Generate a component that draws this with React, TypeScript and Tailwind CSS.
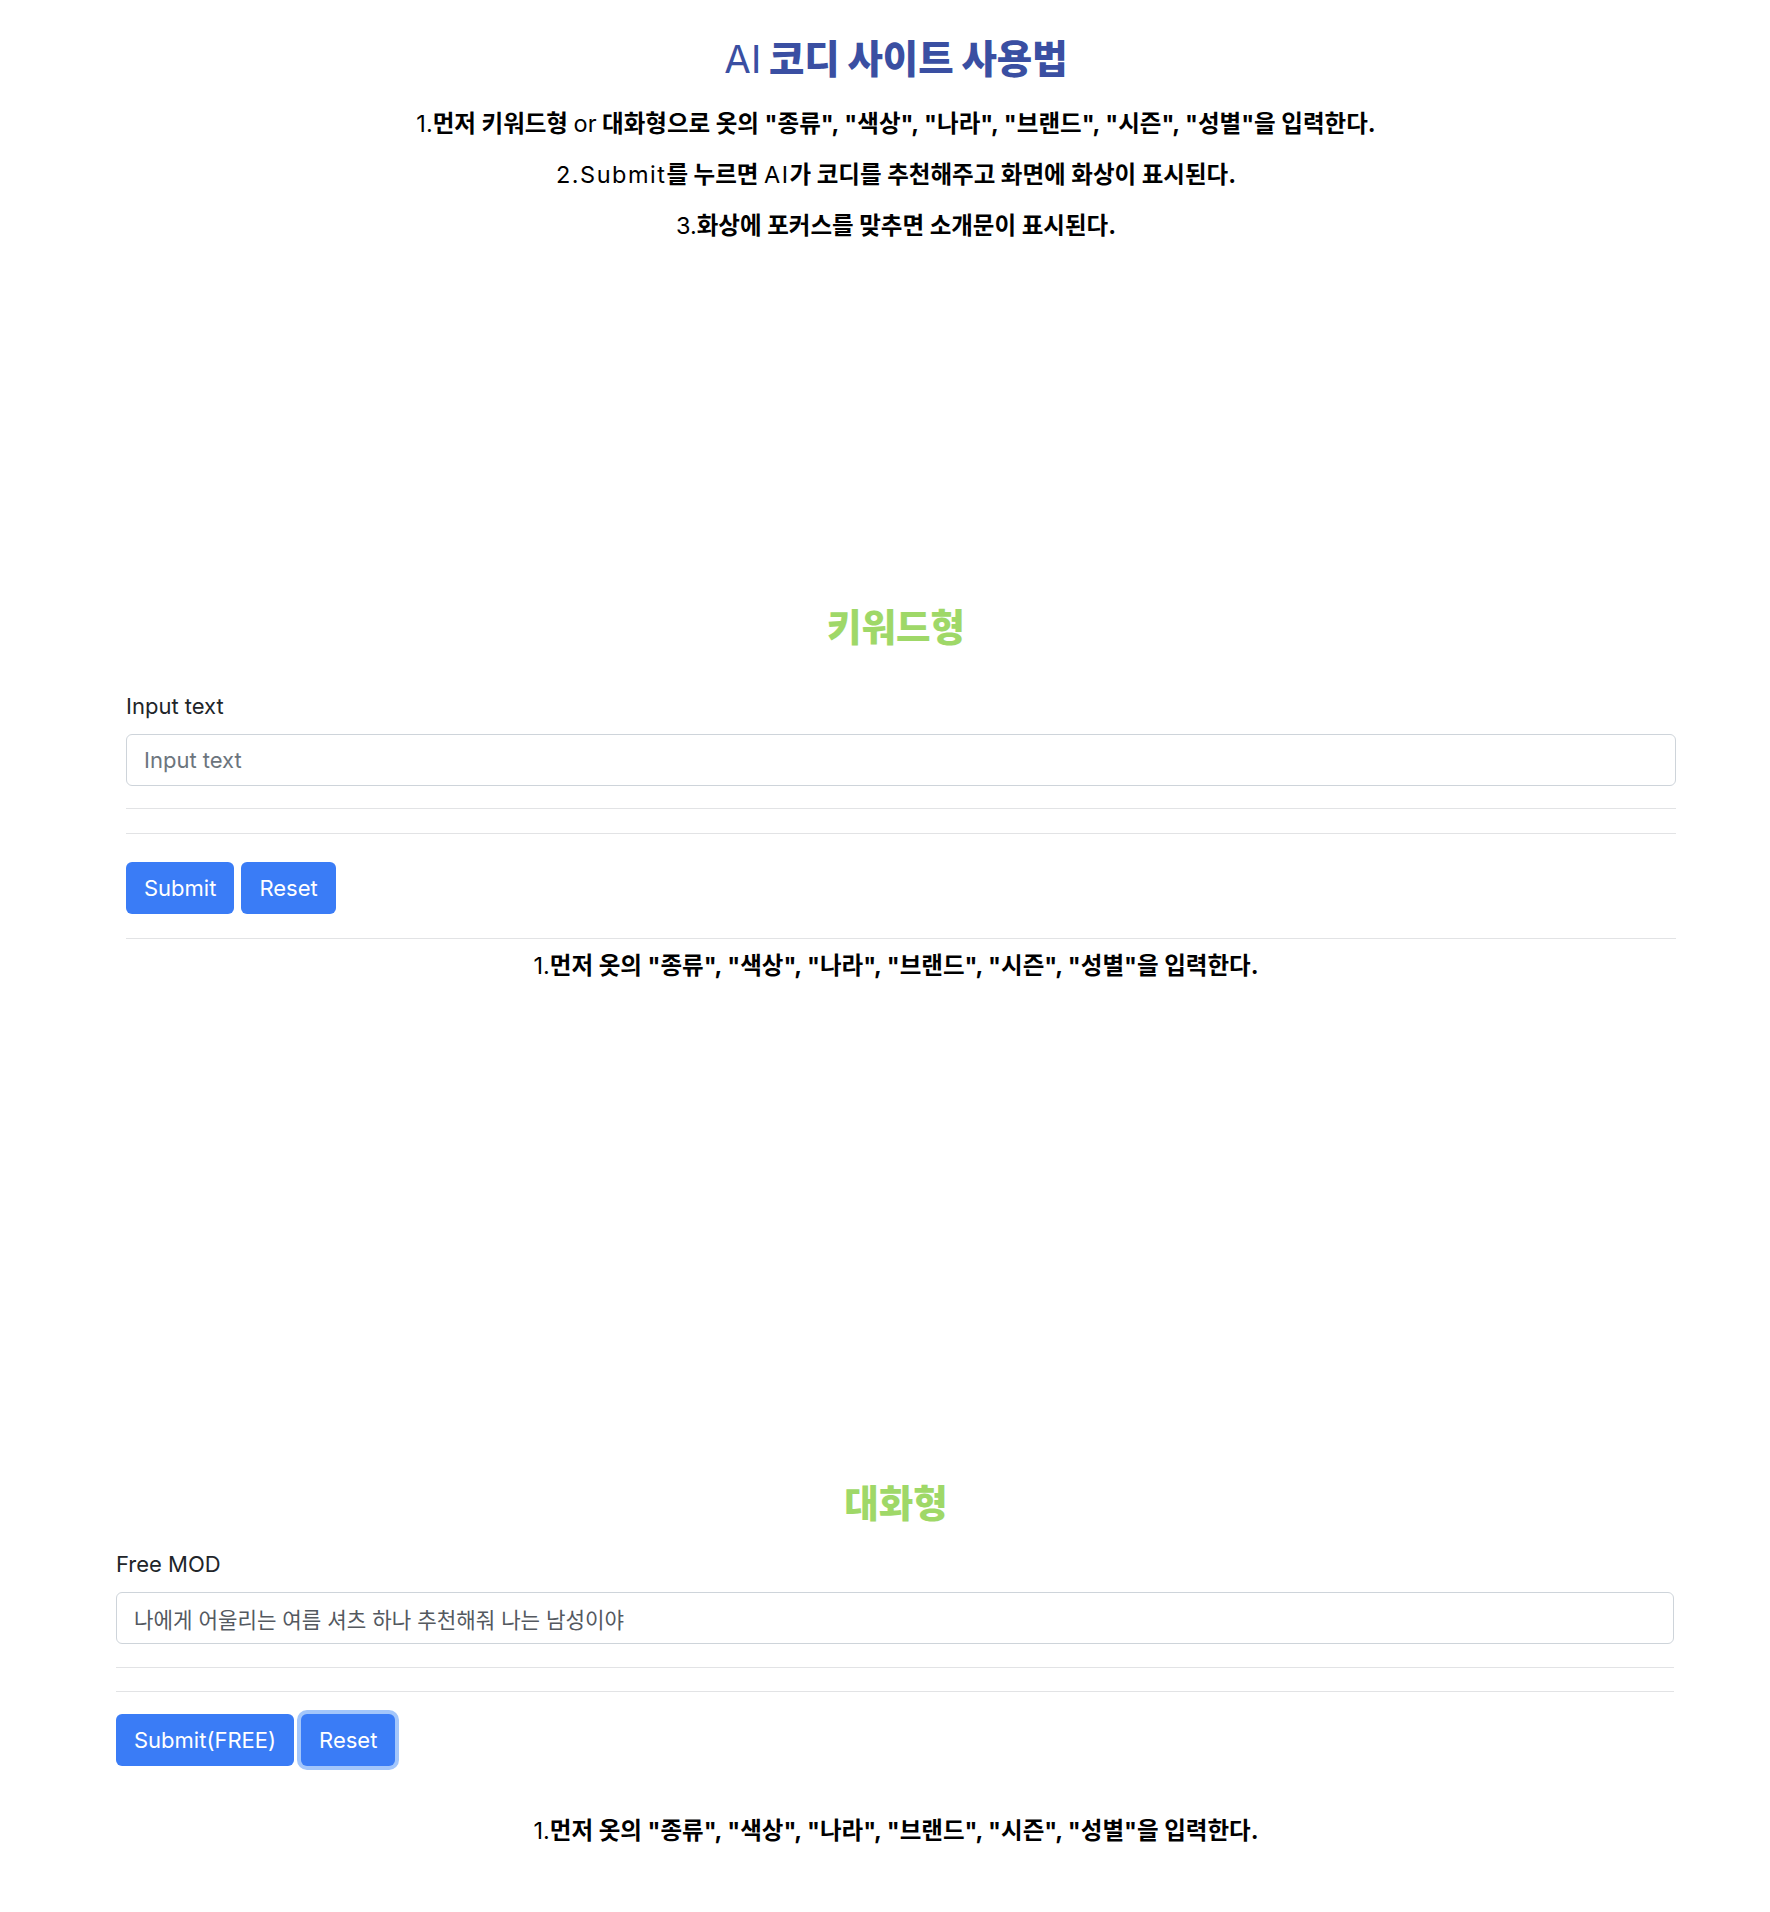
import React from "react"

const latin = "font-normal font-['Inter','Noto_Sans_CJK_KR',sans-serif]"

function Rule() {
  return <div className="h-px bg-[#e2e3e5]" />
}

function Btn({ label, focused = false }: { label: string; focused?: boolean }) {
  return (
    <button
      type="button"
      className={
        "h-[52px] rounded-[6px] bg-[#3a7cf6] px-[18px] text-[22px] leading-none text-white font-['Inter',sans-serif] " +
        (focused ? "ring-[4px] ring-[#a3c6fb]" : "")
      }
    >
      {label}
    </button>
  )
}

function Guide() {
  return (
    <p className="text-center text-[23.5px] leading-[33px] font-bold text-black">
      <span className={latin}>1.</span>먼저 옷의 "종류", "색상", "나라", "브랜드", "시즌", "성별"을 입력한다.
    </p>
  )
}

export default function App() {
  return (
    <div className="min-h-[1912px] bg-white pl-[22px] font-['Inter','Noto_Sans_CJK_KR',sans-serif]">
      <div className="pt-[37px] text-center">
        <h1 className="text-[38.5px] leading-[44px] font-black text-[#3a4fa2]">
          <span className="font-normal">AI</span> 코디 사이트 사용법
        </h1>
        <div className="mt-[26px] flex flex-col gap-[18px] text-[23.5px] leading-[33px] font-bold text-black">
          <p>
            <span className={latin}>1.</span>먼저 키워드형 <span className={latin}>or</span> 대화형으로 옷의 "종류", "색상", "나라", "브랜드", "시즌", "성별"을 입력한다.
          </p>
          <p>
            <span className={latin + " tracking-[1.5px]"}>2.Submit</span>를 누르면 <span className={latin + " tracking-[1.5px]"}>AI</span>가 코디를 추천해주고 화면에 화상이 표시된다.
          </p>
          <p>
            <span className={latin}>3.</span>화상에 포커스를 맞추면 소개문이 표시된다.
          </p>
        </div>
      </div>

      {/* 키워드형 */}
      <h2 className="mt-[364px] text-center text-[37.5px] leading-[44px] font-black text-[#9fd868]">키워드형</h2>
      <div className="ml-[104px] w-[1550px] pt-[40px]">
        <label className="block text-[22px] leading-[33px] text-[#212529]">Input text</label>
        <input
          placeholder="Input text"
          className="mt-[11px] block h-[52px] w-full rounded-[6px] border border-[#ced4da] px-[17px] text-[22px] text-[#212529] outline-none placeholder:text-[#6c757d]"
        />
        <div className="mt-[22px]">
          <Rule />
        </div>
        <div className="mt-[24px]">
          <Rule />
        </div>
        <div className="mt-[28px] flex gap-[7px]">
          <Btn label="Submit" />
          <Btn label="Reset" />
        </div>
        <div className="mt-[24px]">
          <Rule />
        </div>
      </div>
      <div className="mt-[10px]">
        <Guide />
      </div>

      {/* 대화형 */}
      <h2 className="mt-[500px] text-center text-[37.5px] leading-[44px] font-black text-[#9fd868]">대화형</h2>
      <div className="ml-[94px] w-[1558px] pt-[22px]">
        <label className="block text-[22px] leading-[33px] text-[#212529]">Free MOD</label>
        <input
          defaultValue="나에게 어울리는 여름 셔츠 하나 추천해줘 나는 남성이야"
          className="mt-[11px] block h-[52px] w-full rounded-[6px] border border-[#ced4da] px-[17px] text-[21.2px] text-[#54595f] outline-none"
        />
        <div className="mt-[23px]">
          <Rule />
        </div>
        <div className="mt-[23px]">
          <Rule />
        </div>
        <div className="mt-[22px] flex gap-[7px]">
          <Btn label="Submit(FREE)" />
          <Btn label="Reset" focused />
        </div>
      </div>
      <div className="mt-[48px] pb-[60px]">
        <Guide />
      </div>
    </div>
  )
}
